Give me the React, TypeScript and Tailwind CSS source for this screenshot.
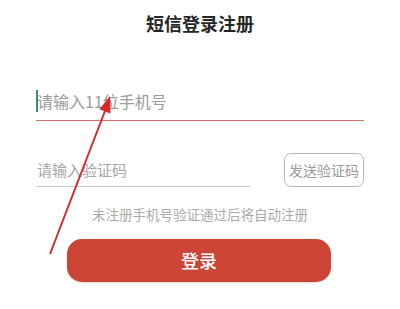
const font = { fontFamily: '"Noto Sans CJK SC", "Noto Sans", sans-serif' };

export default function App() {
  return (
    <div
      className="relative h-[309px] w-[400px] overflow-hidden bg-white"
      style={font}
    >
      <h1 className="pt-[11px] text-center text-[18px] font-bold leading-[24px] text-[#262626]">
        短信登录注册
      </h1>

      {/* 手机号 */}
      <div className="mx-[36px] mt-[51px] flex h-[35px] items-center border-b border-[#cf6f68] pb-[4px]">
        <span className="h-[22px] w-[2px] bg-[#3d8c78]" />
        <input
          type="text"
          placeholder="请输入11位手机号"
          className="-ml-[1px] flex-1 bg-transparent text-[16px] text-[#333] outline-none placeholder:text-[#9b9b9b]"
        />
      </div>

      {/* 验证码 */}
      <div className="mx-[36px] mt-[32px] flex items-end">
        <div className="flex h-[33px] w-[214px] items-center border-b border-[#c8c8c8]">
          <input
            type="text"
            placeholder="请输入验证码"
            className="w-full bg-transparent pl-[1px] pt-[1px] text-[15px] text-[#333] outline-none placeholder:text-[#a5a5a5]"
          />
        </div>
        <button
          type="button"
          className="ml-auto h-[34px] w-[80px] rounded-[7px] border border-[#b4b4b4] text-[14px] text-[#9a9a9a]"
        >
          发送验证码
        </button>
      </div>

      <p className="mt-[19px] text-center text-[13.5px] leading-[16px] text-[#aaaaaa]">
        未注册手机号验证通过后将自动注册
      </p>

      <button
        type="button"
        className="ml-[67px] mt-[17px] h-[43px] w-[264px] rounded-[15px] bg-[#cc4436] text-[18px] font-medium text-white shadow-[0_1px_2px_rgba(0,0,0,0.15)]"
      >
        登录
      </button>

      {/* 标注箭头 */}
      <svg
        className="pointer-events-none absolute inset-0"
        width="400"
        height="309"
        viewBox="0 0 400 309"
      >
        <line x1="50" y1="254" x2="105" y2="111" stroke="#d42a2a" strokeWidth="2" />
        <polygon points="110,96 110.5,113.5 99.5,109.3" fill="#d42a2a" />
      </svg>
    </div>
  );
}
